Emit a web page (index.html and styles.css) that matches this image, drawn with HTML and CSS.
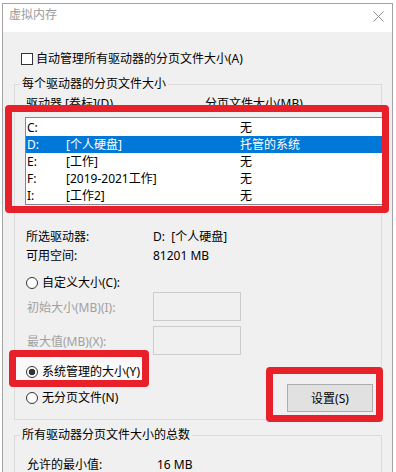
FILE: index.html
```html
<!DOCTYPE html>
<html lang="zh-CN">
<head>
  <meta charset="UTF-8">
  <meta name="viewport" content="width=device-width, initial-scale=1.0">
  <title>虚拟内存</title>
  <link rel="stylesheet" href="styles.css">
</head>
<body>

  <div class="window">
    <!-- Title bar -->
    <div class="titlebar">
      <span class="title">虚拟内存</span>
      <svg class="close" width="11" height="11" viewBox="0 0 11 11">
        <path d="M0.5 0.5L10.5 10.5M10.5 0.5L0.5 10.5" stroke="#8f8f8f" stroke-width="1" fill="none"/>
      </svg>
    </div>

    <div class="content">
      <div class="check-row">
        <span class="checkbox"></span>
        <span>自动管理所有驱动器的分页文件大小(A)</span>
      </div>

      <!-- Per drive settings -->
      <fieldset class="group">
        <legend>每个驱动器的分页文件大小</legend>
        <div class="group-body">
          <div class="list-head">
            <span>驱动器 [卷标](D)</span>
            <span>分页文件大小(MB)</span>
          </div>

          <div class="listbox">
            <div class="row"><span>C:</span><span></span><span>无</span></div>
            <div class="row selected"><span>D:</span><span>[个人硬盘]</span><span>托管的系统</span></div>
            <div class="row"><span>E:</span><span>[工作]</span><span>无</span></div>
            <div class="row"><span>F:</span><span>[2019-2021工作]</span><span>无</span></div>
            <div class="row"><span>I:</span><span>[工作2]</span><span>无</span></div>
          </div>

          <div class="info">
            <span>所选驱动器:</span><span class="keep">D:  [个人硬盘]</span>
            <span>可用空间:</span><span>81201 MB</span>
          </div>

          <div class="radio-row custom"><span class="radio"></span><span>自定义大小(C):</span></div>
          <div class="size-row"><span class="size-label">初始大小(MB)(I):</span><span class="size-input"></span></div>
          <div class="size-row"><span class="size-label">最大值(MB)(X):</span><span class="size-input"></span></div>
          <div class="radio-row system"><span class="radio checked"></span><span>系统管理的大小(Y)</span></div>

          <div class="last-row">
            <div class="radio-row"><span class="radio"></span><span>无分页文件(N)</span></div>
            <button class="btn">设置(S)</button>
          </div>
        </div>
      </fieldset>

      <!-- Totals for all drives -->
      <fieldset class="group total">
        <legend>所有驱动器分页文件大小的总数</legend>
        <div class="total-body">
          <div class="info wide">
            <span>允许的最小值:</span><span>16 MB</span>
          </div>
        </div>
      </fieldset>
    </div>

    <!-- Red annotation frames -->
    <div class="mark mark-list"></div>
    <div class="mark mark-radio"></div>
    <div class="mark mark-button"></div>
  </div>

</body>
</html>
```

FILE: styles.css
```css
/* Base page */
* {
  box-sizing: border-box;
}

body {
  margin: 0;
  height: 472px;
  overflow: hidden;
  background: #fff;
  font-family: "Noto Sans", "Noto Sans CJK SC", sans-serif;
  font-size: 12px;
  color: #000;
}

/* Dialog window */
.window {
  position: relative;
  width: 391px;
  height: 480px;
  margin: 3px 0 0 2px;
  border: 1px solid #a3a3a3;
  border-bottom: none;
  background: #f0f0f0;
}

.titlebar {
  display: flex;
  justify-content: space-between;
  align-items: flex-start;
  height: 28px;
  padding: 0 8px 0 6px;
  background: #fff;
}

.title {
  margin-top: 3px;
  line-height: 16px;
  color: #9a9a9a;
}

.close {
  margin-top: 7px;
}

.content {
  padding: 19px 0 0 11px;
}

/* Checkbox row */
.check-row {
  display: flex;
  align-items: center;
  gap: 3px;
  margin-left: 7px;
  line-height: 16px;
}

.checkbox {
  width: 12px;
  height: 12px;
  border: 1px solid #333;
  background: #fff;
}

/* Group boxes */
.group {
  width: 368px;
  margin: 9px 0 0;
  padding: 0;
  min-width: 0;
  border: 1px solid #dcdcdc;
}

.group legend {
  margin-left: 5px;
  padding: 0 2px;
  line-height: 16px;
}

.group-body {
  padding: 4px 0 7px 10px;
}

.list-head {
  display: grid;
  grid-template-columns: 179px 1fr;
  padding-left: 1px;
  margin-bottom: 5px;
  line-height: 16px;
}

/* Drive list */
.listbox {
  width: 358px;
  height: 88px;
  padding-top: 1px;
  border: 1px solid #828790;
  background: #fff;
}

.row {
  display: grid;
  grid-template-columns: 39px 174px 1fr;
  height: 17px;
  padding-left: 1px;
  line-height: 17px;
}

.row.selected {
  background: #0078d7;
  color: #fff;
}

/* Selected drive info */
.info {
  display: grid;
  grid-template-columns: 127px 1fr;
  margin-top: 22px;
  padding-left: 1px;
  line-height: 19px;
}

.keep {
  white-space: pre;
}

/* Radio buttons */
.radio-row {
  display: flex;
  align-items: center;
  gap: 4px;
  padding-left: 1px;
  line-height: 16px;
}

.radio {
  width: 12px;
  height: 12px;
  border: 1px solid #333;
  border-radius: 50%;
  background: #fff;
}

.radio.checked {
  background: radial-gradient(circle, #333 0 3px, #fff 3.6px);
}

.custom {
  margin-top: 10px;
}

.system {
  position: relative;
  z-index: 1;
  margin-top: 9px;
}

/* Size inputs (disabled) */
.size-row {
  display: flex;
  align-items: center;
  height: 29px;
  margin-top: 1px;
  padding-left: 2px;
}

.size-row + .size-row {
  margin-top: 5px;
}

.size-label {
  width: 126px;
  color: #a0a0a0;
}

.size-input {
  width: 88px;
  height: 29px;
  border: 1px solid #cccccc;
  background: #f0f0f0;
}

.last-row {
  display: flex;
  justify-content: space-between;
  align-items: center;
  margin-top: 4px;
}

.btn {
  width: 86px;
  height: 28px;
  margin-right: 8px;
  padding: 0;
  border: 1px solid #adadad;
  background: #e1e1e1;
  font: inherit;
  color: #000;
}

/* Totals group */
.total {
  height: 60px;
  margin-top: 7px;
}

.total-body {
  padding: 12px 0 0 12px;
}

.info.wide {
  grid-template-columns: 130px 1fr;
  margin-top: 0;
  padding-left: 0;
}

/* Red annotation frames */
.mark {
  position: absolute;
  border: 7px solid #e8202a;
  border-radius: 4px;
  pointer-events: none;
}

.mark-list {
  left: 2px;
  top: 101px;
  width: 384px;
  height: 108px;
}

.mark-radio {
  left: 6px;
  top: 346px;
  width: 140px;
  height: 37px;
  background: #f9f9f9;
}

.mark-button {
  left: 263px;
  top: 363px;
  width: 117px;
  height: 55px;
}
```
